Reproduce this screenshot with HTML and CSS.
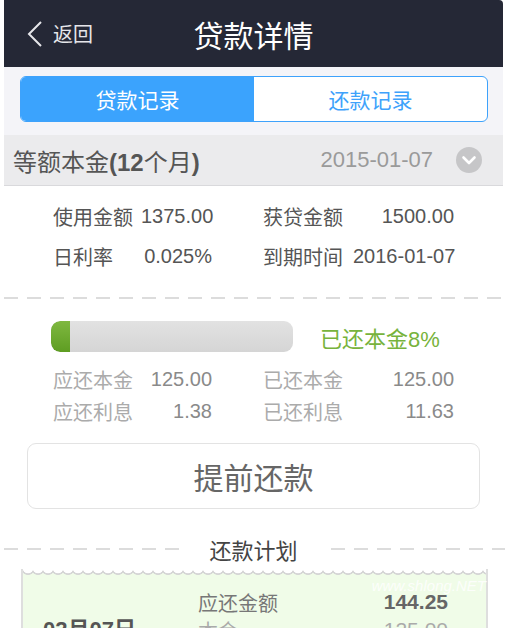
FILE: index.html
```html
<!DOCTYPE html>
<html lang="zh">
<head>
<meta charset="utf-8">
<title>贷款详情</title>
<link rel="stylesheet" href="styles.css">
</head>
<body>
<div class="page">
  <header class="nav">
    <div class="back">
      <svg class="back-icon" width="18" height="28" viewBox="0 0 18 28"><path d="M15 2 L3 14 L15 26" fill="none" stroke="#e6e6ea" stroke-width="2"/></svg>
      <span>返回</span>
    </div>
    <h1 class="title">贷款详情</h1>
  </header>

  <div class="tabs-wrap">
    <div class="tabs">
      <div class="tab active">贷款记录</div>
      <div class="tab">还款记录</div>
    </div>
  </div>

  <div class="band">
    <div class="band-title">等额本金<b>(12</b>个月<b>)</b></div>
    <div class="band-right">
      <span class="band-date">2015-01-07</span>
      <svg class="band-icon" width="26" height="26" viewBox="0 0 26 26"><circle cx="13" cy="13" r="13" fill="#c6c6c8"/><path d="M7.5 10.5 L13 16 L18.5 10.5" fill="none" stroke="#fff" stroke-width="2.6" stroke-linecap="round" stroke-linejoin="round"/></svg>
    </div>
  </div>

  <div class="grid info">
    <span class="lbl">使用金额</span><span class="val">1375.00</span>
    <span class="lbl">获贷金额</span><span class="val">1500.00</span>
    <span class="lbl">日利率</span><span class="val">0.025%</span>
    <span class="lbl">到期时间</span><span class="val">2016-01-07</span>
  </div>

  <div class="dash"></div>

  <div class="progress-row">
    <div class="bar"><div class="fill" style="width:19px"></div></div>
    <div class="pct">已还本金8%</div>
  </div>

  <div class="grid repay">
    <span class="lbl">应还本金</span><span class="val">125.00</span>
    <span class="lbl">已还本金</span><span class="val">125.00</span>
    <span class="lbl">应还利息</span><span class="val">1.38</span>
    <span class="lbl">已还利息</span><span class="val">11.63</span>
  </div>

  <div class="btn">提前还款</div>

  <div class="plan-title">
    <div class="dash side"></div>
    <span>还款计划</span>
    <div class="dash side"></div>
  </div>

  <div class="card">
    <div class="wave"></div>
    <div class="card-body">
      <div class="date">02月07日</div>
      <div class="card-grid">
        <span class="c-lbl">应还金额</span><span class="c-val strong">144.25</span>
        <span class="c-lbl light">本金</span><span class="c-val light">125.00</span>
      </div>
    </div>
    <div class="watermark">www.shlong.NET</div>
  </div>
</div>
</body>
</html>
```

FILE: styles.css
```css
* { box-sizing: border-box; margin: 0; padding: 0; }
html, body { background: #fff; }
body {
  font-family: "Liberation Sans", "Noto Sans CJK SC", sans-serif;
  width: 505px;
  height: 628px;
  overflow: hidden;
}
.page {
  margin-left: 4px;
  width: 501px;
}
.nav {
  height: 67px;
  width: 499px;
  background: #252836;
  border-top-right-radius: 4px;
  display: flex;
  align-items: center;
  justify-content: center;
  position: relative;
}
.back {
  position: absolute;
  left: 22px;
  top: 19px;
  display: flex;
  align-items: center;
  gap: 9px;
  color: #e6e6ea;
  font-size: 20px;
}
.back-icon { display: block; }
.title {
  font-weight: normal;
  font-size: 30px;
  color: #fff;
  margin-top: 1px;
}
.tabs-wrap {
  width: 499px;
  background: #f4f4f8;
  padding: 9px 15px 13px 16px;
}
.tabs {
  height: 46px;
  display: flex;
  border: 1.5px solid #3ea2fb;
  border-radius: 6px;
  overflow: hidden;
  background: #fff;
}
.tab {
  flex: 1;
  display: flex;
  align-items: center;
  justify-content: center;
  font-size: 21px;
  color: #3ea2fb;
}
.tab.active {
  background: #3ba3fd;
  color: #fff;
}
.band {
  width: 499px;
  height: 51px;
  background: #ebebed;
  border-bottom: 1px solid #d9d9dc;
  display: flex;
  align-items: center;
  justify-content: space-between;
  padding: 0 21px 0 9px;
}
.band-title {
  font-size: 24px;
  color: #555;
}
.band-title b { font-weight: bold; }
.band-right {
  display: flex;
  align-items: center;
  gap: 23px;
}
.band-date {
  font-size: 22px;
  color: #9a9a9a;
}
.band-icon { display: block; }
.grid {
  display: grid;
  grid-template-columns: 88px 71px 51px 90px 101px;
  padding-left: 49px;
  align-items: center;
}
.grid .val { text-align: right; white-space: nowrap; }
.grid .lbl:nth-child(4n+3) { grid-column: 4; }
.info {
  padding-top: 10px;
  grid-auto-rows: 40px;
  font-size: 20px;
  color: #555;
}
.dash {
  height: 2px;
  background: repeating-linear-gradient(90deg, #dcdcdc 0 14px, transparent 14px 23px);
}
.info + .dash { margin-top: 21px; }
.progress-row {
  display: flex;
  align-items: center;
  padding-left: 47px;
  margin-top: 22px;
  height: 31px;
}
.bar {
  width: 242px;
  height: 31px;
  border-radius: 9px;
  background: linear-gradient(#e2e2e2, #d5d5d5);
  overflow: hidden;
}
.fill {
  height: 100%;
  background: linear-gradient(#7fb840, #5e9d22);
  border-radius: 9px 0 0 9px;
}
.pct {
  margin-left: 27px;
  font-size: 22px;
  color: #77b33c;
}
.repay {
  margin-top: 11px;
  grid-auto-rows: 32px;
  font-size: 20px;
}
.repay .lbl { color: #ababab; }
.repay .val { color: #8a8a8a; }
.btn {
  margin: 16px 0 0 23px;
  width: 453px;
  height: 66px;
  border: 1px solid #e3e3e3;
  border-radius: 9px;
  display: flex;
  align-items: center;
  justify-content: center;
  font-size: 30px;
  color: #666;
}
.plan-title {
  margin-top: 26px;
  height: 28px;
  display: flex;
  align-items: center;
}
.plan-title span {
  font-size: 22px;
  color: #444;
  padding: 0 33px 0 31px;
}
.dash.side { flex: 1; }
.card {
  margin: 6px 0 0 17px;
  width: 467px;
  height: 80px;
  background: #f0fce8;
  border-left: 2px solid #dedede;
  border-right: 2px solid #dedede;
  position: relative;
}
.wave {
  height: 7px;
  background: radial-gradient(circle at 5px -1px, #fff 0 5px, #d6d6d6 5.6px 6.6px, transparent 7.2px) repeat-x;
  background-size: 10px 7px;
}
.card-body {
  display: flex;
  padding-top: 12px;
}
.date {
  width: 175px;
  padding: 29px 0 0 20px;
  font-size: 22px;
  font-weight: bold;
  color: #555;
  line-height: 25px;
}
.card-grid {
  display: grid;
  grid-template-columns: 100px 150px;
  grid-auto-rows: 28px;
  align-items: center;
}
.c-lbl { font-size: 20px; color: #777; }
.c-val { text-align: right; font-size: 21px; color: #777; }
.c-val.strong { font-weight: bold; color: #666; }
.light { color: #aaa; }
.watermark {
  position: absolute;
  right: 0;
  top: 8px;
  font-size: 15px;
  font-style: italic;
  color: rgba(255,255,255,0.85);
}
```
